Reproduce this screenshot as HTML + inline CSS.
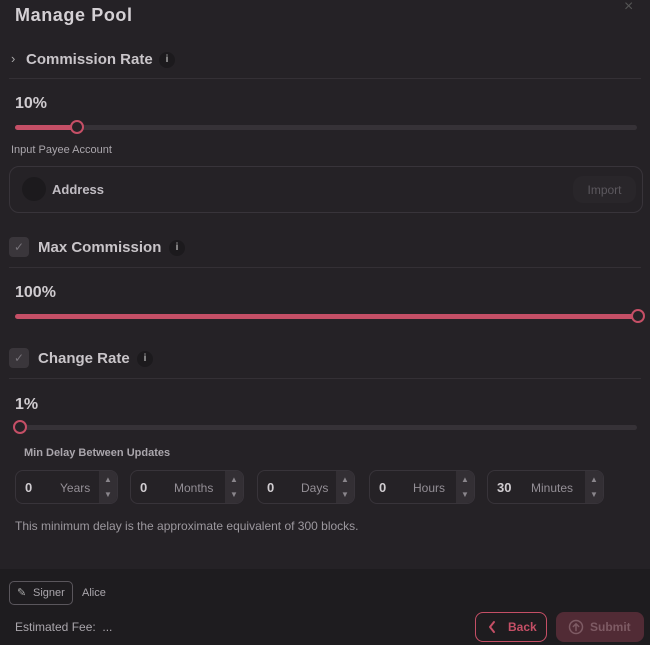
<!DOCTYPE html>
<html><head><style>
*{margin:0;padding:0;box-sizing:border-box}
body{width:650px;height:645px;background:#252226;font-family:"Liberation Sans",sans-serif;color:#c9c5c9;position:relative;overflow:hidden}
.a{position:absolute}
.hr{position:absolute;left:9px;right:9px;height:1px;background:#343035}
.track{position:absolute;left:15px;width:622px;height:5px;border-radius:3px;background:#363237}
.fill{position:absolute;left:15px;height:5px;border-radius:3px;background:#c54f66}
.knob{position:absolute;width:14px;height:14px;border-radius:50%;border:2px solid #c54f66;background:#252226}
.info{position:absolute;width:16px;height:16px;border-radius:50%;background:#1c1a1d;color:#aaa;font-size:10px;font-weight:bold;text-align:center;line-height:16px}
.cb{position:absolute;width:20px;height:20px;border-radius:4px;background:#3a363b;color:#77737a;font-size:12px;text-align:center;line-height:20px}
.h{position:absolute;font-size:15px;font-weight:bold;color:#c9c5c9}
.pct{position:absolute;left:15px;font-size:16px;font-weight:bold;color:#d0ccd0}
.box{position:absolute;top:470px;height:34px;border:1px solid #38343a;border-radius:8px;overflow:hidden}
.box .n{position:absolute;left:9px;top:9px;font-size:13px;font-weight:bold;color:#d0ccd0}
.box .u{position:absolute;top:10px;font-size:12px;color:#948f96}
.box .s{position:absolute;right:0;top:0;width:18px;height:100%;background:#332f34;color:#8a868c;font-size:8px;text-align:center;line-height:15px;padding-top:1px}
</style></head><body>
<div class="a" style="left:15px;top:5px;font-size:18px;font-weight:bold;color:#d4d0d4;letter-spacing:0.6px">Manage Pool</div>
<div class="a" style="left:624px;top:-2px;font-size:16px;color:#555">×</div>

<div class="a" style="left:11px;top:51px;font-size:13px;color:#aaa">›</div>
<div class="h" style="left:26px;top:51px">Commission Rate</div>
<div class="info" style="left:159px;top:52px">i</div>
<div class="hr" style="top:78px"></div>
<div class="pct" style="top:95px">10%</div>
<div class="track" style="top:125px"></div>
<div class="fill" style="top:125px;width:62px"></div>
<div class="knob" style="left:70px;top:120px"></div>
<div class="a" style="left:11px;top:144px;font-size:11px;color:#aaa6ac">Input Payee Account</div>
<div class="a" style="left:9px;top:166px;width:634px;height:47px;border:1px solid #38343a;border-radius:10px"></div>
<div class="a" style="left:22px;top:177px;width:24px;height:24px;border-radius:50%;background:#1c1a1d"></div>
<div class="a" style="left:52px;top:182px;font-size:13px;font-weight:bold;color:#c0bcc2">Address</div>
<div class="a" style="left:573px;top:176px;width:63px;height:27px;border-radius:10px;background:#29262a;color:#5c585e;font-size:12px;text-align:center;line-height:28px">Import</div>

<div class="cb" style="left:9px;top:237px">✓</div>
<div class="h" style="left:38px;top:239px">Max Commission</div>
<div class="info" style="left:169px;top:240px">i</div>
<div class="hr" style="top:267px"></div>
<div class="pct" style="top:284px">100%</div>
<div class="fill" style="top:314px;width:622px"></div>
<div class="knob" style="left:631px;top:309px"></div>

<div class="cb" style="left:9px;top:348px">✓</div>
<div class="h" style="left:38px;top:350px">Change Rate</div>
<div class="info" style="left:137px;top:351px">i</div>
<div class="hr" style="top:378px"></div>
<div class="pct" style="top:396px">1%</div>
<div class="track" style="top:425px"></div>
<div class="knob" style="left:13px;top:420px"></div>
<div class="a" style="left:24px;top:447px;font-size:11px;font-weight:bold;color:#aaa6ac">Min Delay Between Updates</div>

<div class="box" style="left:15px;width:103px"><span class="n">0</span><span class="u" style="left:44px">Years</span><div class="s">▲<br>▼</div></div>
<div class="box" style="left:130px;width:114px"><span class="n">0</span><span class="u" style="left:43px">Months</span><div class="s">▲<br>▼</div></div>
<div class="box" style="left:257px;width:98px"><span class="n">0</span><span class="u" style="left:43px">Days</span><div class="s">▲<br>▼</div></div>
<div class="box" style="left:369px;width:106px"><span class="n">0</span><span class="u" style="left:43px">Hours</span><div class="s">▲<br>▼</div></div>
<div class="box" style="left:487px;width:117px"><span class="n">30</span><span class="u" style="left:43px">Minutes</span><div class="s">▲<br>▼</div></div>
<div class="a" style="left:15px;top:519px;font-size:12px;color:#9c989e">This minimum delay is the approximate equivalent of 300 blocks.</div>

<div class="a" style="left:0;top:569px;width:650px;height:76px;background:#1e1c1f"></div>
<div class="a" style="left:9px;top:581px;width:64px;height:24px;border:1px solid #5a565c;border-radius:5px;font-size:11px;color:#aaa6ac;line-height:22px;padding-left:23px">Signer</div>
<div class="a" style="left:17px;top:586px;font-size:11px;color:#aaa">✎</div>
<div class="a" style="left:82px;top:587px;font-size:11px;color:#aaa6ac">Alice</div>
<div class="a" style="left:15px;top:620px;font-size:12px;color:#aaa6ac">Estimated Fee:&nbsp; ...</div>
<div class="a" style="left:475px;top:612px;width:72px;height:30px;border:1px solid #c54f66;border-radius:8px;color:#c54f66;font-size:12px;font-weight:bold;line-height:28px;padding-left:32px">Back</div>
<svg class="a" style="left:487px;top:620px" width="10" height="14" viewBox="0 0 10 14"><path d="M7 2L3 7l4 5" fill="none" stroke="#c54f66" stroke-width="2" stroke-linecap="round" stroke-linejoin="round"/></svg>
<div class="a" style="left:556px;top:612px;width:88px;height:30px;border-radius:8px;background:#512b35;color:#7e5b64;font-size:12px;font-weight:bold;line-height:30px;padding-left:34px">Submit</div>
<svg class="a" style="left:568px;top:619px" width="16" height="16" viewBox="0 0 16 16"><circle cx="8" cy="8" r="6.5" fill="none" stroke="#7e5b64" stroke-width="1.5"/><path d="M8 11.5V5M5.3 7.5L8 4.8l2.7 2.7" fill="none" stroke="#7e5b64" stroke-width="1.5" stroke-linecap="round"/></svg>
</body></html>
